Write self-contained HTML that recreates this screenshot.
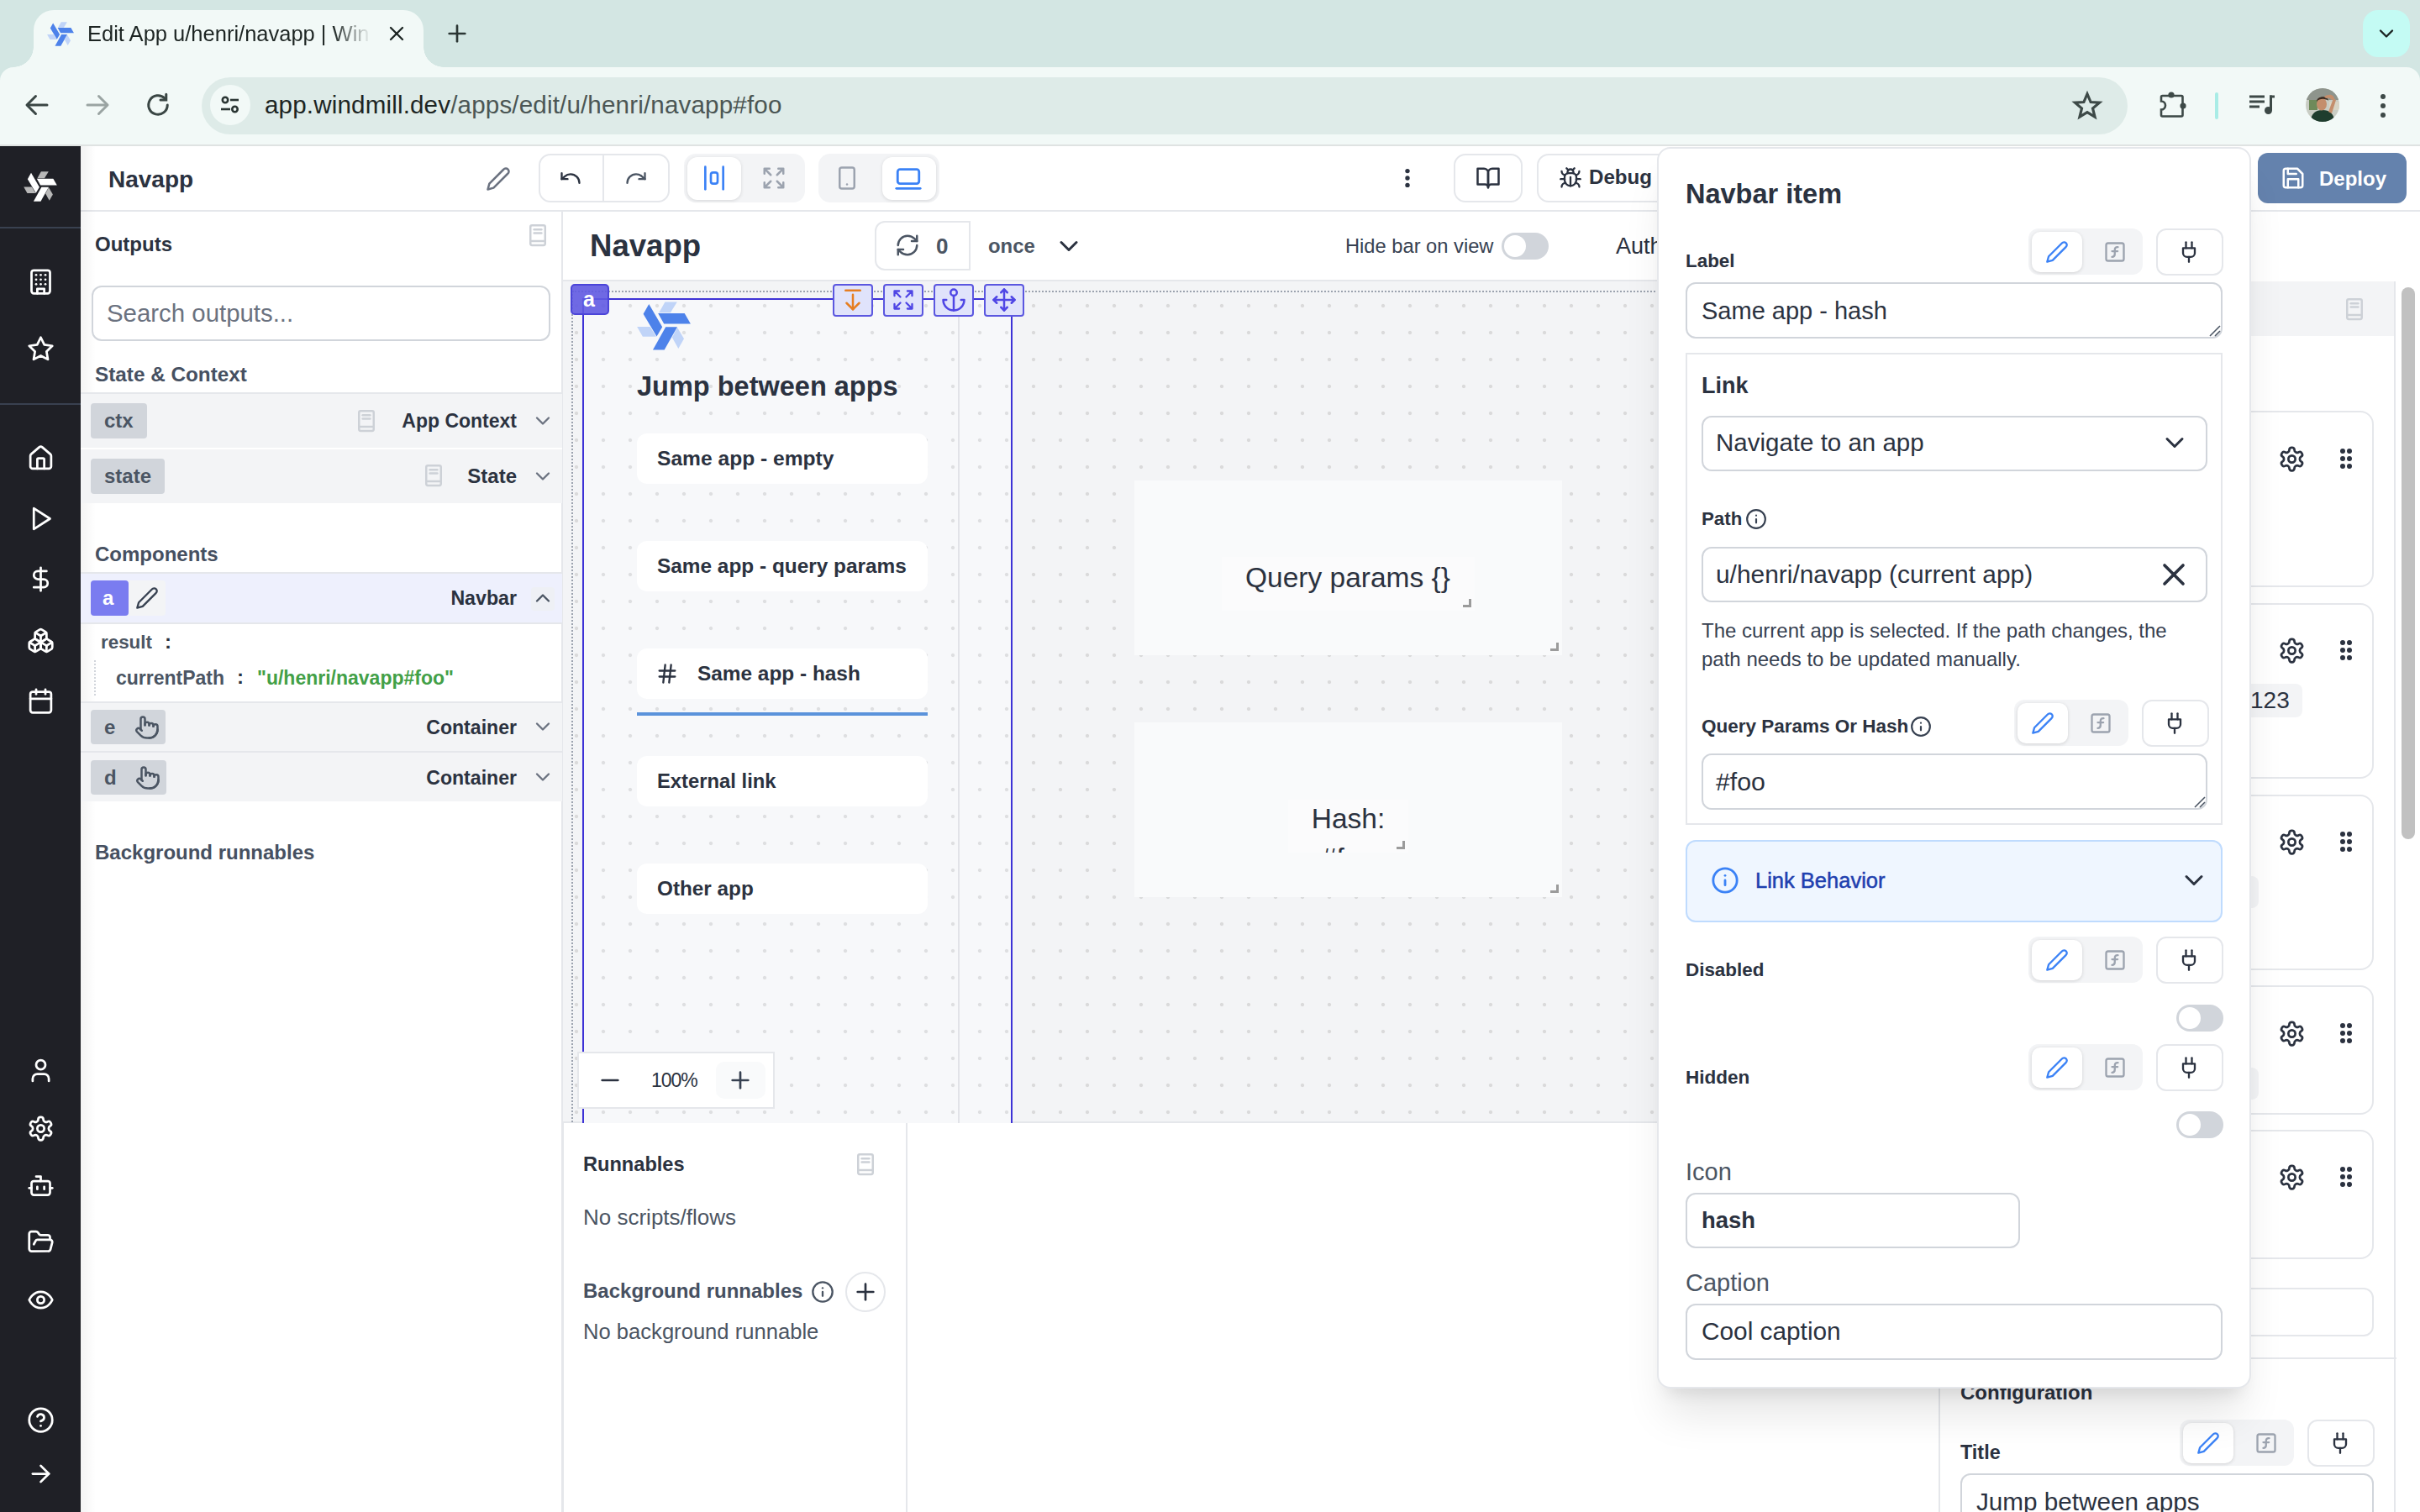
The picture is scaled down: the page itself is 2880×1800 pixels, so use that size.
<!DOCTYPE html>
<html><head><meta charset="utf-8">
<style>
*{box-sizing:border-box;margin:0;padding:0}
html,body{width:2880px;height:1800px;overflow:hidden;background:#fff;font-family:"Liberation Sans",sans-serif;color:#2b3240}
.a{position:absolute}
svg{display:block}
.ic{fill:none;stroke:currentColor;stroke-width:2;stroke-linecap:round;stroke-linejoin:round}
.t{position:absolute;white-space:nowrap}
.b{font-weight:bold}
@media (max-width:2000px){html{zoom:0.5}}
</style></head>
<body>
<svg width="0" height="0" style="position:absolute"><defs>
<symbol id="wmD" viewBox="8 9 64 58"><polygon points="22.3,11.9 38.2,39.2 31.5,50.6 15.6,23.8"/><polygon points="33.2,23.1 64.7,23.1 71.9,35.5 40.2,35.5"/><polygon points="42.2,39.2 56,39.2 40.7,66.5 27,66.5"/></symbol>
<symbol id="wmL" viewBox="8 9 64 58"><polygon points="41.4,9.4 55.8,9.4 47.9,22.3 34.2,22.3"/><polygon points="8.2,38.9 23.6,38.9 31,50.8 14.9,50.8"/><polygon points="56,39.7 64,53.3 57.3,65 49.9,51.8"/></symbol>
</defs></svg>
<!-- ============ BROWSER CHROME ============ -->
<div class="a" style="left:0;top:0;width:2880px;height:120px;background:#d3e6e3"></div>

<div class="a" style="left:0;top:80px;width:2880px;height:94px;background:#f2f9f7;border-bottom:2px solid #dfe3e2;border-radius:16px 16px 0 0"></div>
<!-- tab -->
<div class="a" style="left:40px;top:12px;width:464px;height:80px;background:#f2f9f7;border-radius:24px 24px 0 0"></div>
<div class="a" style="left:16px;top:56px;width:24px;height:24px;background:radial-gradient(circle at 0 0,transparent 23.5px,#f2f9f7 24px)"></div>
<div class="a" style="left:504px;top:56px;width:24px;height:24px;background:radial-gradient(circle at 100% 0,transparent 23.5px,#f2f9f7 24px)"></div>
<svg class="a" style="left:56px;top:26px" width="32" height="29"><use href="#wmL" fill="#c0d4f8"/><use href="#wmD" fill="#4d82ea"/></svg>
<div class="t" style="left:104px;top:22px;font-size:25.5px;line-height:36px;color:#1d2523;width:334px;overflow:hidden;-webkit-mask-image:linear-gradient(90deg,#000 292px,transparent 338px)">Edit App u/henri/navapp | Windmill</div>
<svg class="a ic" style="left:458px;top:26px;color:#1d2523" width="28" height="28" viewBox="0 0 24 24" stroke-width="2.8" stroke-linecap="butt"><path d="M18 6 6 18"/><path d="m6 6 12 12"/></svg>
<svg class="a ic" style="left:528px;top:24px;color:#2b3634" width="32" height="32" viewBox="0 0 24 24" stroke-width="2.5" stroke-linecap="butt"><path d="M5 12h14"/><path d="M12 5v14"/></svg>
<!-- tab dropdown -->
<div class="a" style="left:2812px;top:12px;width:56px;height:56px;background:#c4fbf4;border-radius:18px"></div>
<svg class="a ic" style="left:2826px;top:26px;color:#1b2321" width="28" height="28" viewBox="0 0 24 24" stroke-width="2.8" stroke-linecap="butt" stroke-linejoin="miter"><path d="m6 9 6 6 6-6"/></svg>
<!-- nav buttons -->
<svg class="a ic" style="left:26px;top:107px;color:#3a4644" width="36" height="36" viewBox="0 0 24 24" stroke-width="2.1" stroke-linecap="butt" stroke-linejoin="miter"><path d="M20 12H5"/><path d="m11 5-7 7 7 7"/></svg>
<svg class="a ic" style="left:98px;top:107px;color:#9aa4a2" width="36" height="36" viewBox="0 0 24 24" stroke-width="2.1" stroke-linecap="butt" stroke-linejoin="miter"><path d="M4 12h15"/><path d="m13 5 7 7-7 7"/></svg>
<svg class="a ic" style="left:170px;top:107px;color:#3a4644" width="36" height="36" viewBox="0 0 24 24" stroke-width="2.2" stroke-linecap="butt"><path d="M19.5 12a7.5 7.5 0 1 1-2.2-5.3"/><path d="M18.5 3.5v4.5H14" stroke-linejoin="miter"/></svg>
<!-- url bar -->
<div class="a" style="left:240px;top:92px;width:2292px;height:68px;background:#deebe8;border-radius:34px"></div>
<div class="a" style="left:250px;top:101px;width:48px;height:48px;background:#f2f9f7;border-radius:24px"></div>
<svg class="a" style="left:258px;top:109px" width="32" height="32" viewBox="0 0 32 32" fill="none" stroke="#2a3533" stroke-width="2.6">
 <circle cx="10" cy="10" r="3.2"/><path d="M16 10h10"/><circle cx="21.5" cy="21" r="3.2"/><path d="M5 21h11"/>
</svg>
<div class="t" style="left:315px;top:107px;font-size:29.6px;line-height:36px;color:#1d2523;letter-spacing:0.15px">app.windmill.dev<span style="color:#4b5654">/apps/edit/u/henri/navapp#foo</span></div>
<!-- right icons -->
<svg class="a" style="left:2465px;top:107px" width="38" height="38" viewBox="0 0 24 24" fill="none" stroke="#3d4947" stroke-width="2" stroke-linejoin="miter"><polygon points="12 3 14.6 9.2 21.2 9.6 16.1 13.9 17.7 20.3 12 16.8 6.3 20.3 7.9 13.9 2.8 9.6 9.4 9.2 12 3"/></svg>
<svg class="a" style="left:2560px;top:100px" width="48" height="48" viewBox="0 0 48 48"><path d="M13.5 14 H36 a1.5 1.5 0 0 1 1.5 1.5 V37 a1.5 1.5 0 0 1 -1.5 1.5 H13.5 a1.5 1.5 0 0 1 -1.5 -1.5 V30.5 A5 5 0 0 0 12 20.5 V15.5 a1.5 1.5 0 0 1 1.5 -1.5Z" fill="none" stroke="#3d4947" stroke-width="2.6"/><circle cx="24" cy="13" r="3.6" fill="#3d4947"/><circle cx="38" cy="26" r="3.6" fill="#3d4947"/></svg>
<div class="a" style="left:2636px;top:110px;width:4px;height:32px;background:#a9ece6;border-radius:2px"></div>
<svg class="a" style="left:2674px;top:106px" width="36" height="36" viewBox="0 0 24 24" fill="#3d4947"><rect x="2" y="5" width="12" height="2"/><rect x="2" y="9" width="12" height="2"/><rect x="2" y="13" width="8" height="2"/><rect x="18" y="5" width="4" height="2"/><rect x="18" y="5" width="2" height="12"/><circle cx="17" cy="17" r="3"/></svg>
<svg class="a" style="left:2744px;top:105px" width="40" height="40" viewBox="0 0 40 40"><defs><clipPath id="avc"><circle cx="20" cy="20" r="20"/></clipPath></defs><g clip-path="url(#avc)"><rect width="40" height="40" fill="#c9cdc4"/><rect x="0" y="0" width="40" height="14" fill="#8e948c"/><rect x="4" y="14" width="10" height="12" fill="#6f8a5a"/><rect x="28" y="16" width="12" height="10" fill="#d8d4c4"/><path d="M6 40 C6 30 12 26 20 26 C28 26 34 30 34 40Z" fill="#1f3d2e"/><path d="M27 28 L33 12 L36 14 L31 30Z" fill="#c48e6c"/><ellipse cx="19" cy="19" rx="6" ry="7.5" fill="#c48e6c"/><path d="M13 16 C13 9 26 8 27 15 C24 12 16 12 13 16Z" fill="#3b2a20"/><path d="M22 10 C28 6 34 8 34 13 L31 14 C29 11 26 11 24 12Z" fill="#c48e6c"/></g></svg>
<svg class="a" style="left:2824px;top:107px" width="24" height="38" viewBox="0 0 24 38" fill="#3d4947"><circle cx="12" cy="8" r="3"/><circle cx="12" cy="19" r="3"/><circle cx="12" cy="30" r="3"/></svg>


<!-- ============ SIDEBAR ============ -->
<div class="a" style="left:0;top:174px;width:96px;height:1626px;background:#1f2026"></div>
<svg class="a" style="left:28px;top:204px" width="40" height="36"><use href="#wmL" fill="#b8b8b8"/><use href="#wmD" fill="#fff"/></svg>
<div class="a" style="left:0;top:270px;width:96px;height:2px;background:#394150"></div>
<div class="a" style="left:0;top:480px;width:96px;height:2px;background:#394150"></div>
<div id="sideicons" style="color:#fff">
<svg class="a ic" style="left:32px;top:319px" width="33" height="33" viewBox="0 0 24 24"><rect width="16" height="20" x="4" y="2" rx="2" ry="2"/><path d="M9 22v-4h6v4"/><path d="M8 6h.01"/><path d="M16 6h.01"/><path d="M12 6h.01"/><path d="M12 10h.01"/><path d="M12 14h.01"/><path d="M16 10h.01"/><path d="M16 14h.01"/><path d="M8 10h.01"/><path d="M8 14h.01"/></svg>
<svg class="a ic" style="left:32px;top:399px" width="33" height="33" viewBox="0 0 24 24"><polygon points="12 2 15.09 8.26 22 9.27 17 14.14 18.18 21.02 12 17.77 5.82 21.02 7 14.14 2 9.27 8.91 8.26 12 2"/></svg>
<svg class="a ic" style="left:32px;top:529px" width="33" height="33" viewBox="0 0 24 24"><path d="M15 21v-8a1 1 0 0 0-1-1h-4a1 1 0 0 0-1 1v8"/><path d="M3 10a2 2 0 0 1 .709-1.528l7-5.999a2 2 0 0 1 2.582 0l7 5.999A2 2 0 0 1 21 10v9a2 2 0 0 1-2 2H5a2 2 0 0 1-2-2z"/></svg>
<svg class="a ic" style="left:32px;top:601px" width="33" height="33" viewBox="0 0 24 24"><polygon points="6 3 20 12 6 21 6 3"/></svg>
<svg class="a ic" style="left:32px;top:673px" width="33" height="33" viewBox="0 0 24 24"><line x1="12" x2="12" y1="2" y2="22"/><path d="M17 5H9.5a3.5 3.5 0 0 0 0 7h5a3.5 3.5 0 0 1 0 7H6"/></svg>
<svg class="a ic" style="left:32px;top:746px" width="33" height="33" viewBox="0 0 24 24"><path d="M2.97 12.92A2 2 0 0 0 2 14.63v3.24a2 2 0 0 0 .97 1.71l3 1.8a2 2 0 0 0 2.06 0L12 19v-5.5l-5-3-4.03 2.42Z"/><path d="m7 16.5-4.74-2.85"/><path d="m7 16.5 5-3"/><path d="M7 16.5v5.17"/><path d="M12 13.5V19l3.97 2.38a2 2 0 0 0 2.06 0l3-1.8a2 2 0 0 0 .97-1.71v-3.24a2 2 0 0 0-.97-1.71L17 10.5l-5 3Z"/><path d="m17 16.5-5-3"/><path d="m17 16.5 4.74-2.85"/><path d="M17 16.5v5.17"/><path d="M7.97 4.42A2 2 0 0 0 7 6.13v4.37l5 3 5-3V6.13a2 2 0 0 0-.97-1.71l-3-1.8a2 2 0 0 0-2.06 0l-3 1.8Z"/><path d="M12 8 7.26 5.15"/><path d="m12 8 4.74-2.85"/><path d="M12 13.5V8"/></svg>
<svg class="a ic" style="left:32px;top:818px" width="33" height="33" viewBox="0 0 24 24"><rect width="18" height="18" x="3" y="4" rx="2" ry="2"/><line x1="16" x2="16" y1="2" y2="6"/><line x1="8" x2="8" y1="2" y2="6"/><line x1="3" x2="21" y1="10" y2="10"/></svg>
<svg class="a ic" style="left:32px;top:1258px" width="33" height="33" viewBox="0 0 24 24"><path d="M19 21v-2a4 4 0 0 0-4-4H9a4 4 0 0 0-4 4v2"/><circle cx="12" cy="7" r="4"/></svg>
<svg class="a ic" style="left:32px;top:1327px" width="33" height="33" viewBox="0 0 24 24"><path d="M12.22 2h-.44a2 2 0 0 0-2 2v.18a2 2 0 0 1-1 1.73l-.43.25a2 2 0 0 1-2 0l-.15-.08a2 2 0 0 0-2.73.73l-.22.38a2 2 0 0 0 .73 2.73l.15.1a2 2 0 0 1 1 1.72v.51a2 2 0 0 1-1 1.74l-.15.09a2 2 0 0 0-.73 2.73l.22.38a2 2 0 0 0 2.73.73l.15-.08a2 2 0 0 1 2 0l.43.25a2 2 0 0 1 1 1.73V20a2 2 0 0 0 2 2h.44a2 2 0 0 0 2-2v-.18a2 2 0 0 1 1-1.73l.43-.25a2 2 0 0 1 2 0l.15.08a2 2 0 0 0 2.73-.73l.22-.39a2 2 0 0 0-.73-2.73l-.15-.08a2 2 0 0 1-1-1.74v-.5a2 2 0 0 1 1-1.74l.15-.09a2 2 0 0 0 .73-2.73l-.22-.38a2 2 0 0 0-2.73-.73l-.15.08a2 2 0 0 1-2 0l-.43-.25a2 2 0 0 1-1-1.73V4a2 2 0 0 0-2-2z"/><circle cx="12" cy="12" r="3"/></svg>
<svg class="a ic" style="left:32px;top:1395px" width="33" height="33" viewBox="0 0 24 24"><path d="M12 8V4H8"/><rect width="16" height="12" x="4" y="8" rx="2"/><path d="M2 14h2"/><path d="M20 14h2"/><path d="M15 13v2"/><path d="M9 13v2"/></svg>
<svg class="a ic" style="left:32px;top:1462px" width="33" height="33" viewBox="0 0 24 24"><path d="m6 14 1.5-2.9A2 2 0 0 1 9.24 10H20a2 2 0 0 1 1.94 2.5l-1.54 6a2 2 0 0 1-1.95 1.5H4a2 2 0 0 1-2-2V5a2 2 0 0 1 2-2h3.9a2 2 0 0 1 1.69.9l.81 1.2a2 2 0 0 0 1.67.9H18a2 2 0 0 1 2 2v2"/></svg>
<svg class="a ic" style="left:32px;top:1531px" width="33" height="33" viewBox="0 0 24 24"><path d="M2 12s3-7 10-7 10 7 10 7-3 7-10 7-10-7-10-7Z"/><circle cx="12" cy="12" r="3"/></svg>
<svg class="a ic" style="left:32px;top:1674px" width="33" height="33" viewBox="0 0 24 24"><circle cx="12" cy="12" r="10"/><path d="M9.09 9a3 3 0 0 1 5.83 1c0 2-3 3-3 3"/><path d="M12 17h.01"/></svg>
<svg class="a ic" style="left:32px;top:1738px" width="33" height="33" viewBox="0 0 24 24"><path d="M5 12h14"/><path d="m12 5 7 7-7 7"/></svg>
</div>

<!-- ============ APP HEADER ============ -->
<div class="a" style="left:96px;top:174px;width:2784px;height:78px;background:#fff;border-bottom:2px solid #e5e7eb"></div>
<div class="a" style="left:96px;top:174px;width:18px;height:1626px;background:linear-gradient(90deg,rgba(0,0,0,.05),rgba(0,0,0,0))"></div>
<div class="t b" style="left:129px;top:196px;font-size:28px;line-height:36px;color:#2b3240">Navapp</div>
<svg class="a ic" style="left:578px;top:198px;color:#6b7280" width="30" height="30" viewBox="0 0 24 24" stroke-width="1.7"><path d="M17 3a2.85 2.83 0 1 1 4 4L7.5 20.5 2 22l1.5-5.5Z"/></svg>
<!-- undo/redo -->
<div class="a" style="left:641px;top:183px;width:156px;height:58px;border:2px solid #e5e7eb;border-radius:14px;background:#fff"></div>
<div class="a" style="left:717px;top:185px;width:2px;height:54px;background:#e5e7eb"></div>
<svg class="a ic" style="left:665px;top:198px;color:#2b3240" width="28" height="28" viewBox="0 0 24 24" stroke-width="2.2"><path d="M3 7v6h6"/><path d="M21 17a9 9 0 0 0-9-9 9 9 0 0 0-6 2.3L3 13"/></svg>
<svg class="a ic" style="left:743px;top:198px;color:#4b5563" width="28" height="28" viewBox="0 0 24 24" stroke-width="2.2"><path d="M21 7v6h-6"/><path d="M3 17a9 9 0 0 1 9-9 9 9 0 0 1 6 2.3l3 2.7"/></svg>
<!-- layout group -->
<div class="a" style="left:814px;top:183px;width:144px;height:58px;border-radius:14px;background:#f3f4f6"></div>
<div class="a" style="left:818px;top:187px;width:64px;height:51px;border-radius:12px;background:#fff;box-shadow:0 1px 4px rgba(0,0,0,.12)"></div>
<svg class="a ic" style="left:834px;top:196px;color:#3b82f6" width="32" height="32" viewBox="0 0 24 24" stroke-width="2"><rect width="6" height="10" x="9" y="7" rx="2"/><path d="M4 22V2"/><path d="M20 22V2"/></svg>
<svg class="a ic" style="left:906px;top:197px;color:#9ca3af" width="30" height="30" viewBox="0 0 24 24" stroke-width="2"><path d="m21 21-6-6m6 6v-4.8m0 4.8h-4.8"/><path d="M3 16.2V21m0 0h4.8M3 21l6-6"/><path d="M21 7.8V3m0 0h-4.8M21 3l-6 6"/><path d="M3 7.8V3m0 0h4.8M3 3l6 6"/></svg>
<!-- device group -->
<div class="a" style="left:974px;top:183px;width:144px;height:58px;border-radius:14px;background:#f3f4f6"></div>
<div class="a" style="left:1050px;top:187px;width:64px;height:51px;border-radius:12px;background:#fff;box-shadow:0 1px 4px rgba(0,0,0,.12)"></div>
<svg class="a ic" style="left:993px;top:197px;color:#9ca3af" width="30" height="30" viewBox="0 0 24 24" stroke-width="2"><rect width="14" height="20" x="5" y="2" rx="2" ry="2"/><path d="M12 18h.01"/></svg>
<svg class="a ic" style="left:1064px;top:196px;color:#3b82f6" width="34" height="34" viewBox="0 0 24 24" stroke-width="2"><rect width="18" height="12" x="3" y="4" rx="2" ry="2"/><line x1="2" x2="22" y1="20" y2="20"/></svg>
<!-- right side -->
<svg class="a" style="left:1662px;top:194px" width="26" height="36" viewBox="0 0 26 36" fill="#2b3240"><circle cx="13" cy="9.6" r="2.7"/><circle cx="13" cy="18" r="2.7"/><circle cx="13" cy="26.4" r="2.7"/></svg>
<div class="a" style="left:1730px;top:183px;width:82px;height:58px;border:2px solid #e5e7eb;border-radius:14px;background:#fff"></div>
<svg class="a ic" style="left:1756px;top:197px;color:#2b3240" width="30" height="30" viewBox="0 0 24 24" stroke-width="2.2"><path d="M2 3h6a4 4 0 0 1 4 4v14a3 3 0 0 0-3-3H2z"/><path d="M22 3h-6a4 4 0 0 0-4 4v14a3 3 0 0 1 3-3h7z"/></svg>
<div class="a" style="left:1829px;top:183px;width:200px;height:58px;border:2px solid #e5e7eb;border-radius:14px;background:#fff"></div>
<svg class="a ic" style="left:1855px;top:198px;color:#2b3240" width="28" height="28" viewBox="0 0 24 24" stroke-width="2"><path d="m8 2 1.88 1.88"/><path d="M14.12 3.88 16 2"/><path d="M9 7.13v-1a3.003 3.003 0 1 1 6 0v1"/><path d="M12 20c-3.3 0-6-2.7-6-6v-3a4 4 0 0 1 4-4h4a4 4 0 0 1 4 4v3c0 3.3-2.7 6-6 6"/><path d="M12 20v-9"/><path d="M6.53 9C4.6 8.8 3 7.1 3 5"/><path d="M6 13H2"/><path d="M3 21c0-2.1 1.7-3.9 3.8-4"/><path d="M20.97 5c0 2.1-1.6 3.8-3.5 4"/><path d="M22 13h-4"/><path d="M17.2 17c2.1.1 3.8 1.9 3.8 4"/></svg>
<div class="t b" style="left:1891px;top:193px;font-size:24.1px;line-height:36px;color:#2b3240">Debug</div>
<!-- deploy -->
<div class="a" style="left:2687px;top:182px;width:177px;height:60px;border-radius:12px;background:#6482ad"></div>
<svg class="a ic" style="left:2714px;top:197px;color:#fff" width="30" height="30" viewBox="0 0 24 24" stroke-width="2"><path d="M19 21H5a2 2 0 0 1-2-2V5a2 2 0 0 1 2-2h11l5 5v11a2 2 0 0 1-2 2z"/><polyline points="17 21 17 13 7 13 7 21"/><polyline points="7 3 7 8 15 8"/></svg>
<div class="t b" style="left:2760px;top:195px;font-size:24.0px;line-height:36px;color:#fff">Deploy</div>

<!-- ============ LEFT PANEL ============ -->
<div class="a" style="left:96px;top:252px;width:574px;height:1548px;background:#fff;border-right:2px solid #e5e7eb"></div>
<div class="a" style="left:96px;top:252px;width:18px;height:1548px;background:linear-gradient(90deg,rgba(0,0,0,.045),rgba(0,0,0,0))"></div>
<div class="t b" style="left:113px;top:276px;font-size:24px;line-height:30px;color:#2b3240">Outputs</div>
<svg class="a ic" style="left:625px;top:265px;color:#cdd1d7" width="30" height="30" viewBox="0 0 24 24" stroke-width="1.6"><rect x="5" y="2.5" width="14" height="19" rx="1.5"/><path d="M5 17.5h14"/><path d="M8.5 6.5h7"/><path d="M8.5 10h7"/></svg>
<div class="a" style="left:109px;top:340px;width:546px;height:66px;border:2px solid #d1d5db;border-radius:12px;background:#fff"></div>
<div class="t" style="left:127px;top:355px;font-size:29.4px;line-height:36px;color:#6b7280">Search outputs...</div>
<div class="t b" style="left:113px;top:431px;font-size:24.3px;line-height:30px;color:#465061">State &amp; Context</div>
<!-- ctx row -->
<div class="a" style="left:96px;top:467px;width:573px;height:66px;background:#f3f4f6;border-top:2px solid #e5e7eb"></div>
<div class="a" style="left:108px;top:480px;width:67px;height:42px;background:#d1d5db;border-radius:4px"></div>
<div class="t b" style="left:124px;top:486px;font-size:24px;line-height:30px;color:#4b5563">ctx</div>
<svg class="a ic" style="left:421px;top:486px;color:#cdd1d7" width="30" height="30" viewBox="0 0 24 24" stroke-width="1.6"><rect x="5" y="2.5" width="14" height="19" rx="1.5"/><path d="M5 17.5h14"/><path d="M8.5 6.5h7"/><path d="M8.5 10h7"/></svg>
<div class="t b" style="right:2265px;top:486px;font-size:23.0px;line-height:30px;color:#2b3240">App Context</div>
<svg class="a ic" style="left:632px;top:487px;color:#6b7280" width="28" height="28" viewBox="0 0 24 24" stroke-width="1.8"><path d="m6 9 6 6 6-6"/></svg>
<div class="a" style="left:96px;top:533px;width:573px;height:2px;background:#fff"></div>
<!-- state row -->
<div class="a" style="left:96px;top:535px;width:573px;height:64px;background:#f3f4f6"></div>
<div class="a" style="left:108px;top:546px;width:88px;height:42px;background:#d1d5db;border-radius:4px"></div>
<div class="t b" style="left:124px;top:552px;font-size:24px;line-height:30px;color:#4b5563">state</div>
<svg class="a ic" style="left:501px;top:551px;color:#cdd1d7" width="30" height="30" viewBox="0 0 24 24" stroke-width="1.6"><rect x="5" y="2.5" width="14" height="19" rx="1.5"/><path d="M5 17.5h14"/><path d="M8.5 6.5h7"/><path d="M8.5 10h7"/></svg>
<div class="t b" style="right:2265px;top:552px;font-size:24px;line-height:30px;color:#2b3240">State</div>
<svg class="a ic" style="left:632px;top:553px;color:#6b7280" width="28" height="28" viewBox="0 0 24 24" stroke-width="1.8"><path d="m6 9 6 6 6-6"/></svg>
<div class="t b" style="left:113px;top:645px;font-size:24px;line-height:30px;color:#465061">Components</div>
<!-- navbar row -->
<div class="a" style="left:96px;top:681px;width:573px;height:62px;background:#eef0fd;border-top:2px solid #e5e7eb;border-bottom:2px solid #e5e7eb"></div>
<div class="a" style="left:108px;top:691px;width:45px;height:42px;background:#7a7cf0;border-radius:4px"></div>
<div class="t b" style="left:122px;top:697px;font-size:24px;line-height:30px;color:#fff">a</div>
<div class="a" style="left:153px;top:691px;width:44px;height:42px;background:#f3f4f6;border-radius:0 4px 4px 0"></div>
<svg class="a ic" style="left:161px;top:698px;color:#374151" width="28" height="28" viewBox="0 0 24 24" stroke-width="1.8"><path d="M17 3a2.85 2.83 0 1 1 4 4L7.5 20.5 2 22l1.5-5.5Z"/></svg>
<div class="t b" style="right:2265px;top:697px;font-size:23.2px;line-height:30px;color:#2b3240">Navbar</div>
<div class="a" style="left:632px;top:699px;width:28px;height:28px;background:#eef0f5;border-radius:4px"></div>
<svg class="a ic" style="left:632px;top:698px;color:#4b5563" width="28" height="28" viewBox="0 0 24 24" stroke-width="1.8"><path d="m18 15-6-6-6 6"/></svg>
<div class="t b" style="left:120px;top:750px;font-size:22.4px;line-height:30px;color:#4b5563">result</div>
<div class="t b" style="left:196px;top:749px;font-size:24px;line-height:30px;color:#2b3240">:</div>
<div class="a" style="left:112px;top:786px;width:0;height:42px;border-left:2px dotted #d1d5db"></div>
<div class="t" style="left:138px;top:792px;font-size:23px;line-height:30px;color:#4b5563;font-weight:bold">currentPath</div>
<div class="t b" style="left:282px;top:791px;font-size:24px;line-height:30px;color:#2b3240">:</div>
<div class="t" style="left:306px;top:792px;font-size:23px;line-height:30px;color:#43a047;font-weight:bold">"u/henri/navapp#foo"</div>
<!-- e row -->
<div class="a" style="left:96px;top:835px;width:573px;height:59px;background:#f3f4f6;border-top:2px solid #e5e7eb"></div>
<div class="a" style="left:108px;top:845px;width:89px;height:41px;background:#d1d5db;border-radius:4px"></div>
<div class="t b" style="left:124px;top:851px;font-size:24px;line-height:30px;color:#4b5563">e</div>
<svg class="a ic" style="left:160px;top:851px;color:#4b5563" width="30" height="30" viewBox="0 0 24 24" stroke-width="1.7"><path d="M22 14a8 8 0 0 1-8 8"/><path d="M18 11v-1a2 2 0 0 0-2-2a2 2 0 0 0-2 2"/><path d="M14 10V9a2 2 0 0 0-2-2a2 2 0 0 0-2 2v1"/><path d="M10 9.5V4a2 2 0 0 0-2-2a2 2 0 0 0-2 2v10"/><path d="M18 11a2 2 0 1 1 4 0v3a8 8 0 0 1-8 8h-2c-2.8 0-4.5-.86-5.99-2.34l-3.6-3.6a2 2 0 0 1 2.83-2.82L7 15"/></svg>
<div class="t b" style="right:2265px;top:851px;font-size:23.1px;line-height:30px;color:#2b3240">Container</div>
<svg class="a ic" style="left:632px;top:851px;color:#6b7280" width="28" height="28" viewBox="0 0 24 24" stroke-width="1.8"><path d="m6 9 6 6 6-6"/></svg>
<!-- d row -->
<div class="a" style="left:96px;top:894px;width:573px;height:60px;background:#f3f4f6;border-top:2px solid #e5e7eb"></div>
<div class="a" style="left:108px;top:905px;width:90px;height:41px;background:#d1d5db;border-radius:4px"></div>
<div class="t b" style="left:124px;top:911px;font-size:24px;line-height:30px;color:#4b5563">d</div>
<svg class="a ic" style="left:161px;top:911px;color:#4b5563" width="30" height="30" viewBox="0 0 24 24" stroke-width="1.7"><path d="M22 14a8 8 0 0 1-8 8"/><path d="M18 11v-1a2 2 0 0 0-2-2a2 2 0 0 0-2 2"/><path d="M14 10V9a2 2 0 0 0-2-2a2 2 0 0 0-2 2v1"/><path d="M10 9.5V4a2 2 0 0 0-2-2a2 2 0 0 0-2 2v10"/><path d="M18 11a2 2 0 1 1 4 0v3a8 8 0 0 1-8 8h-2c-2.8 0-4.5-.86-5.99-2.34l-3.6-3.6a2 2 0 0 1 2.83-2.82L7 15"/></svg>
<div class="t b" style="right:2265px;top:911px;font-size:23.1px;line-height:30px;color:#2b3240">Container</div>
<svg class="a ic" style="left:632px;top:911px;color:#6b7280" width="28" height="28" viewBox="0 0 24 24" stroke-width="1.8"><path d="m6 9 6 6 6-6"/></svg>
<div class="t b" style="left:113px;top:1000px;font-size:24px;line-height:30px;color:#465061">Background runnables</div>

<!-- ============ CANVAS ============ -->
<div class="a" style="left:670px;top:252px;width:1637px;height:83px;background:#fff;border-bottom:2px solid #e5e7eb"></div>
<div class="t b" style="left:702px;top:272px;font-size:36.6px;line-height:42px;color:#2b3240">Navapp</div>
<div class="a" style="left:1041px;top:263px;width:114px;height:59px;border:2px solid #e5e7eb;border-radius:12px 0 0 12px;background:#fff"></div>
<svg class="a ic" style="left:1065px;top:277px;color:#4b5563" width="30" height="30" viewBox="0 0 24 24" stroke-width="2"><path d="M3 12a9 9 0 0 1 9-9 9.75 9.75 0 0 1 6.74 2.74L21 8"/><path d="M21 3v5h-5"/><path d="M21 12a9 9 0 0 1-9 9 9.75 9.75 0 0 1-6.74-2.74L3 16"/><path d="M8 16H3v5"/></svg>
<div class="t b" style="left:1114px;top:278px;font-size:26px;line-height:30px;color:#4b5563">0</div>
<div class="t b" style="left:1176px;top:277px;font-size:23.9px;line-height:32px;color:#4b5563">once</div>
<svg class="a ic" style="left:1254px;top:275px;color:#2b3240" width="36" height="36" viewBox="0 0 24 24" stroke-width="2"><path d="m6 9 6 6 6-6"/></svg>
<div class="t" style="left:1601px;top:277px;font-size:23.7px;line-height:32px;color:#374151">Hide bar on view</div>
<div class="a" style="left:1787px;top:277px;width:56px;height:32px;border-radius:16px;background:#d1d5db"></div>
<div class="a" style="left:1790px;top:280px;width:26px;height:26px;border-radius:13px;background:#fff"></div>
<div class="t" style="left:1923px;top:277px;font-size:27px;line-height:32px;color:#2b3240">Authenticated</div>
<div class="a" style="left:670px;top:335px;width:1637px;height:1002px;background-color:#f3f4f6;background-image:radial-gradient(circle,#dadadb 1.6px,rgba(218,218,219,0) 2.6px);background-size:32px 32px;background-position:0px 13px;border-bottom:2px solid #e5e7eb"></div>
<div class="a" style="left:681px;top:346px;width:1300px;height:0;border-top:2px dotted #9ca3af"></div>
<div class="a" style="left:680px;top:346px;width:0;height:990px;border-left:2px dotted #9ca3af"></div>
<div class="a" style="left:693px;top:355px;width:512px;height:982px;background-color:#f7f8fa;background-image:radial-gradient(circle,#dedfe1 1.6px,rgba(222,223,225,0) 2.6px);background-size:32px 32px;background-position:-25px -9px;border:2px solid #3d32d6;border-bottom:none"></div>
<div class="a" style="left:1140px;top:357px;width:2px;height:980px;background:#e2e3e8"></div>
<div class="a" style="left:679px;top:338px;width:46px;height:37px;background:rgba(96,90,226,.9);border:2px solid #4b45d8;border-radius:5px"></div>
<div class="t b" style="left:694px;top:340px;font-size:25px;line-height:32px;color:#fff">a</div>
<div class="a" style="left:991px;top:338px;width:48px;height:39px;background:#e0e3fb;border:2px solid #5b57e0;border-radius:4px"></div>
<div class="a" style="left:1051px;top:338px;width:48px;height:39px;background:#e0e3fb;border:2px solid #5b57e0;border-radius:4px"></div>
<div class="a" style="left:1111px;top:338px;width:48px;height:39px;background:#e0e3fb;border:2px solid #5b57e0;border-radius:4px"></div>
<div class="a" style="left:1171px;top:338px;width:48px;height:39px;background:#e0e3fb;border:2px solid #5b57e0;border-radius:4px"></div>

<svg class="a ic" style="left:1000px;top:342px;color:#e67e22" width="30" height="30" viewBox="0 0 24 24" stroke-width="2"><path d="M19 3H5"/><path d="M12 21V7"/><path d="m6 15 6 6 6-6"/></svg>
<svg class="a ic" style="left:1061px;top:343px;color:#4f46e5" width="28" height="28" viewBox="0 0 24 24" stroke-width="2.2"><path d="m21 21-6-6m6 6v-4.8m0 4.8h-4.8"/><path d="M3 16.2V21m0 0h4.8M3 21l6-6"/><path d="M21 7.8V3m0 0h-4.8M21 3l-6 6"/><path d="M3 7.8V3m0 0h4.8M3 3l6 6"/></svg>
<svg class="a ic" style="left:1120px;top:342px;color:#4f46e5" width="30" height="30" viewBox="0 0 24 24" stroke-width="2.2"><path d="M12 22V8"/><path d="M5 12H2a10 10 0 0 0 20 0h-3"/><circle cx="12" cy="5" r="3"/></svg>
<svg class="a ic" style="left:1180px;top:342px;color:#4f46e5" width="30" height="30" viewBox="0 0 24 24" stroke-width="2.2"><path d="M12 2v20"/><path d="m15 19-3 3-3-3"/><path d="m19 9 3 3-3 3"/><path d="M2 12h20"/><path d="m5 9-3 3 3 3"/><path d="m9 5 3-3 3 3"/></svg>
<svg class="a" style="left:758px;top:359px" width="64" height="58"><use href="#wmL" fill="#c0d4f8"/><use href="#wmD" fill="#4d82ea"/></svg>
<div class="t b" style="left:758px;top:440px;font-size:32.5px;line-height:40px;color:#2b3240">Jump between apps</div>
<div class="a" style="left:758px;top:516px;width:346px;height:60px;background:#fff;border-radius:12px"></div>
<div class="t b" style="left:782px;top:531px;font-size:24.6px;line-height:30px;color:#2b3240">Same app - empty</div>
<div class="a" style="left:758px;top:644px;width:346px;height:60px;background:#fff;border-radius:12px"></div>
<div class="t b" style="left:782px;top:659px;font-size:24.4px;line-height:30px;color:#2b3240">Same app - query params</div>
<div class="a" style="left:758px;top:772px;width:346px;height:60px;background:#fff;border-radius:12px"></div>
<svg class="a ic" style="left:780px;top:788px;color:#2b3240" width="28" height="28" viewBox="0 0 24 24" stroke-width="2.2"><line x1="4" x2="20" y1="9" y2="9"/><line x1="4" x2="20" y1="15" y2="15"/><line x1="10" x2="8" y1="3" y2="21"/><line x1="16" x2="14" y1="3" y2="21"/></svg>
<div class="t b" style="left:830px;top:787px;font-size:24.4px;line-height:30px;color:#2b3240">Same app - hash</div>
<div class="a" style="left:758px;top:900px;width:346px;height:60px;background:#fff;border-radius:12px"></div>
<div class="t b" style="left:782px;top:915px;font-size:23.8px;line-height:30px;color:#2b3240">External link</div>
<div class="a" style="left:758px;top:1028px;width:346px;height:60px;background:#fff;border-radius:12px"></div>
<div class="t b" style="left:782px;top:1043px;font-size:24.3px;line-height:30px;color:#2b3240">Other app</div>

<div class="a" style="left:758px;top:848px;width:346px;height:4px;background:#5b93db"></div>
<!-- containers -->
<div class="a" style="left:1350px;top:572px;width:509px;height:208px;background:#f9fafb"></div>
<div class="a" style="left:1454px;top:663px;width:301px;height:64px;background:#fbfbfc"></div>
<div class="t" style="left:1482px;top:669px;font-size:33.5px;line-height:38px;color:#2b3240">Query params {}</div>
<div class="a" style="left:1741px;top:713px;width:10px;height:10px;border-right:3px solid #9b9b9b;border-bottom:3px solid #9b9b9b"></div>
<div class="a" style="left:1845px;top:765px;width:10px;height:10px;border-right:3px solid #9b9b9b;border-bottom:3px solid #9b9b9b"></div>
<div class="a" style="left:1350px;top:860px;width:509px;height:208px;background:#f9fafb"></div>
<div class="a" style="left:1533px;top:952px;width:143px;height:63px;background:#fbfbfc;overflow:hidden"><div class="t" style="left:0;width:143px;text-align:center;top:-1px;font-size:33.5px;line-height:47px;color:#2b3240">Hash:<br>#foo</div></div>
<div class="a" style="left:1662px;top:1001px;width:10px;height:10px;border-right:3px solid #9b9b9b;border-bottom:3px solid #9b9b9b"></div>
<div class="a" style="left:1845px;top:1053px;width:10px;height:10px;border-right:3px solid #9b9b9b;border-bottom:3px solid #9b9b9b"></div>
<!-- zoom control -->
<div class="a" style="left:687px;top:1252px;width:235px;height:68px;background:#fff;border:2px solid #e5e7eb"></div>
<svg class="a ic" style="left:710px;top:1270px;color:#2b3240" width="32" height="32" viewBox="0 0 24 24" stroke-width="2"><path d="M5 12h14"/></svg>
<div class="t" style="left:775px;top:1270px;font-size:23px;letter-spacing:-1px;line-height:32px;color:#2b3240">100%</div>
<div class="a" style="left:852px;top:1264px;width:59px;height:44px;background:#f9fafb;border-radius:10px"></div>
<svg class="a ic" style="left:865px;top:1270px;color:#374151" width="32" height="32" viewBox="0 0 24 24" stroke-width="1.7"><path d="M5 12h14"/><path d="M12 5v14"/></svg>
<!-- runnables -->
<div class="a" style="left:669px;top:1337px;width:411px;height:463px;background:#fff;border-left:2px solid #e5e7eb;border-right:2px solid #e5e7eb"></div>
<div class="t b" style="left:694px;top:1371px;font-size:23.6px;line-height:30px;color:#2b3240">Runnables</div>
<svg class="a ic" style="left:1015px;top:1371px;color:#cdd1d7" width="30" height="30" viewBox="0 0 24 24" stroke-width="1.6"><rect x="5" y="2.5" width="14" height="19" rx="1.5"/><path d="M5 17.5h14"/><path d="M8.5 6.5h7"/><path d="M8.5 10h7"/></svg>
<div class="t" style="left:694px;top:1434px;font-size:26px;line-height:30px;color:#4b5563">No scripts/flows</div>
<div class="t b" style="left:694px;top:1522px;font-size:24px;line-height:30px;color:#465061">Background runnables</div>
<svg class="a ic" style="left:965px;top:1524px;color:#4b5563" width="28" height="28" viewBox="0 0 24 24" stroke-width="1.8"><circle cx="12" cy="12" r="10"/><path d="M12 16v-4"/><path d="M12 8h.01"/></svg>
<div class="a" style="left:1006px;top:1514px;width:48px;height:48px;border:2px solid #e5e7eb;border-radius:24px;background:#fff"></div>
<svg class="a ic" style="left:1014px;top:1522px;color:#2b3240" width="32" height="32" viewBox="0 0 24 24" stroke-width="2"><path d="M5 12h14"/><path d="M12 5v14"/></svg>
<div class="t" style="left:694px;top:1570px;font-size:25.6px;line-height:30px;color:#4b5563">No background runnable</div>

<!-- ============ RIGHT PANEL ============ -->
<div class="a" style="left:2307px;top:252px;width:573px;height:1548px;background:#fff;border-left:2px solid #e5e7eb"></div>
<div class="a" style="left:2309px;top:335px;width:541px;height:65px;background:#f3f4f6"></div>
<svg class="a ic" style="left:2787px;top:353px;color:#cdd1d7" width="30" height="30" viewBox="0 0 24 24" stroke-width="1.6"><rect x="5" y="2.5" width="14" height="19" rx="1.5"/><path d="M5 17.5h14"/><path d="M8.5 6.5h7"/><path d="M8.5 10h7"/></svg>
<div class="a" style="left:2849px;top:335px;width:2px;height:1465px;background:#e5e7eb"></div>
<div class="a" style="left:2858px;top:342px;width:16px;height:657px;border-radius:8px;background:#c1c1c1"></div>
<div class="a" style="left:2333px;top:489px;width:492px;height:210px;border:2px solid #e5e7eb;border-radius:16px;background:#fff"></div>
<div class="a" style="left:2333px;top:718px;width:492px;height:209px;border:2px solid #e5e7eb;border-radius:16px;background:#fff"></div>
<div class="a" style="left:2333px;top:946px;width:492px;height:209px;border:2px solid #e5e7eb;border-radius:16px;background:#fff"></div>
<div class="a" style="left:2333px;top:1173px;width:492px;height:154px;border:2px solid #e5e7eb;border-radius:16px;background:#fff"></div>
<div class="a" style="left:2333px;top:1345px;width:492px;height:154px;border:2px solid #e5e7eb;border-radius:16px;background:#fff"></div>
<div class="a" style="left:2333px;top:1533px;width:492px;height:58px;border:2px solid #e5e7eb;border-radius:12px;background:#fff"></div>
<svg class="a ic" style="left:2711px;top:530px;color:#2b3240" width="33" height="33" viewBox="0 0 24 24" stroke-width="1.9"><path d="M12.22 2h-.44a2 2 0 0 0-2 2v.18a2 2 0 0 1-1 1.730l-.43.25a2 2 0 0 1-2 0l-.15-.08a2 2 0 0 0-2.73.73l-.22.38a2 2 0 0 0 .73 2.73l.15.1a2 2 0 0 1 1 1.72v.51a2 2 0 0 1-1 1.74l-.15.09a2 2 0 0 0-.73 2.73l.22.38a2 2 0 0 0 2.73.73l.15-.08a2 2 0 0 1 2 0l.43.25a2 2 0 0 1 1 1.73V20a2 2 0 0 0 2 2h.44a2 2 0 0 0 2-2v-.18a2 2 0 0 1 1-1.73l.43-.25a2 2 0 0 1 2 0l.15.08a2 2 0 0 0 2.73-.73l.22-.39a2 2 0 0 0-.73-2.730l-.15-.08a2 2 0 0 1-1-1.74v-.5a2 2 0 0 1 1-1.74l.15-.09a2 2 0 0 0 .73-2.73l-.22-.38a2 2 0 0 0-2.73-.73l-.15.08a2 2 0 0 1-2 0l-.43-.25a2 2 0 0 1-1-1.73V4a2 2 0 0 0-2-2z"/><circle cx="12" cy="12" r="3"/></svg><div class="a" style="left:2785px;top:533.7px;width:6px;height:6px;border-radius:3px;background:#2b3240"></div><div class="a" style="left:2785px;top:543.0px;width:6px;height:6px;border-radius:3px;background:#2b3240"></div><div class="a" style="left:2785px;top:552.3px;width:6px;height:6px;border-radius:3px;background:#2b3240"></div><div class="a" style="left:2793px;top:533.7px;width:6px;height:6px;border-radius:3px;background:#2b3240"></div><div class="a" style="left:2793px;top:543.0px;width:6px;height:6px;border-radius:3px;background:#2b3240"></div><div class="a" style="left:2793px;top:552.3px;width:6px;height:6px;border-radius:3px;background:#2b3240"></div>
<svg class="a ic" style="left:2711px;top:758px;color:#2b3240" width="33" height="33" viewBox="0 0 24 24" stroke-width="1.9"><path d="M12.22 2h-.44a2 2 0 0 0-2 2v.18a2 2 0 0 1-1 1.730l-.43.25a2 2 0 0 1-2 0l-.15-.08a2 2 0 0 0-2.73.73l-.22.38a2 2 0 0 0 .73 2.73l.15.1a2 2 0 0 1 1 1.72v.51a2 2 0 0 1-1 1.74l-.15.09a2 2 0 0 0-.73 2.73l.22.38a2 2 0 0 0 2.73.73l.15-.08a2 2 0 0 1 2 0l.43.25a2 2 0 0 1 1 1.73V20a2 2 0 0 0 2 2h.44a2 2 0 0 0 2-2v-.18a2 2 0 0 1 1-1.73l.43-.25a2 2 0 0 1 2 0l.15.08a2 2 0 0 0 2.73-.73l.22-.39a2 2 0 0 0-.73-2.730l-.15-.08a2 2 0 0 1-1-1.74v-.5a2 2 0 0 1 1-1.74l.15-.09a2 2 0 0 0 .73-2.73l-.22-.38a2 2 0 0 0-2.73-.73l-.15.08a2 2 0 0 1-2 0l-.43-.25a2 2 0 0 1-1-1.73V4a2 2 0 0 0-2-2z"/><circle cx="12" cy="12" r="3"/></svg><div class="a" style="left:2785px;top:761.7px;width:6px;height:6px;border-radius:3px;background:#2b3240"></div><div class="a" style="left:2785px;top:771.0px;width:6px;height:6px;border-radius:3px;background:#2b3240"></div><div class="a" style="left:2785px;top:780.3px;width:6px;height:6px;border-radius:3px;background:#2b3240"></div><div class="a" style="left:2793px;top:761.7px;width:6px;height:6px;border-radius:3px;background:#2b3240"></div><div class="a" style="left:2793px;top:771.0px;width:6px;height:6px;border-radius:3px;background:#2b3240"></div><div class="a" style="left:2793px;top:780.3px;width:6px;height:6px;border-radius:3px;background:#2b3240"></div>
<svg class="a ic" style="left:2711px;top:986px;color:#2b3240" width="33" height="33" viewBox="0 0 24 24" stroke-width="1.9"><path d="M12.22 2h-.44a2 2 0 0 0-2 2v.18a2 2 0 0 1-1 1.730l-.43.25a2 2 0 0 1-2 0l-.15-.08a2 2 0 0 0-2.73.73l-.22.38a2 2 0 0 0 .73 2.73l.15.1a2 2 0 0 1 1 1.72v.51a2 2 0 0 1-1 1.74l-.15.09a2 2 0 0 0-.73 2.73l.22.38a2 2 0 0 0 2.73.73l.15-.08a2 2 0 0 1 2 0l.43.25a2 2 0 0 1 1 1.73V20a2 2 0 0 0 2 2h.44a2 2 0 0 0 2-2v-.18a2 2 0 0 1 1-1.73l.43-.25a2 2 0 0 1 2 0l.15.08a2 2 0 0 0 2.73-.73l.22-.39a2 2 0 0 0-.73-2.730l-.15-.08a2 2 0 0 1-1-1.74v-.5a2 2 0 0 1 1-1.74l.15-.09a2 2 0 0 0 .73-2.73l-.22-.38a2 2 0 0 0-2.73-.73l-.15.08a2 2 0 0 1-2 0l-.43-.25a2 2 0 0 1-1-1.73V4a2 2 0 0 0-2-2z"/><circle cx="12" cy="12" r="3"/></svg><div class="a" style="left:2785px;top:989.7px;width:6px;height:6px;border-radius:3px;background:#2b3240"></div><div class="a" style="left:2785px;top:999.0px;width:6px;height:6px;border-radius:3px;background:#2b3240"></div><div class="a" style="left:2785px;top:1008.3px;width:6px;height:6px;border-radius:3px;background:#2b3240"></div><div class="a" style="left:2793px;top:989.7px;width:6px;height:6px;border-radius:3px;background:#2b3240"></div><div class="a" style="left:2793px;top:999.0px;width:6px;height:6px;border-radius:3px;background:#2b3240"></div><div class="a" style="left:2793px;top:1008.3px;width:6px;height:6px;border-radius:3px;background:#2b3240"></div>
<svg class="a ic" style="left:2711px;top:1214px;color:#2b3240" width="33" height="33" viewBox="0 0 24 24" stroke-width="1.9"><path d="M12.22 2h-.44a2 2 0 0 0-2 2v.18a2 2 0 0 1-1 1.730l-.43.25a2 2 0 0 1-2 0l-.15-.08a2 2 0 0 0-2.73.73l-.22.38a2 2 0 0 0 .73 2.73l.15.1a2 2 0 0 1 1 1.72v.51a2 2 0 0 1-1 1.74l-.15.09a2 2 0 0 0-.73 2.73l.22.38a2 2 0 0 0 2.73.73l.15-.08a2 2 0 0 1 2 0l.43.25a2 2 0 0 1 1 1.73V20a2 2 0 0 0 2 2h.44a2 2 0 0 0 2-2v-.18a2 2 0 0 1 1-1.73l.43-.25a2 2 0 0 1 2 0l.15.08a2 2 0 0 0 2.73-.73l.22-.39a2 2 0 0 0-.73-2.730l-.15-.08a2 2 0 0 1-1-1.74v-.5a2 2 0 0 1 1-1.74l.15-.09a2 2 0 0 0 .73-2.73l-.22-.38a2 2 0 0 0-2.73-.73l-.15.08a2 2 0 0 1-2 0l-.43-.25a2 2 0 0 1-1-1.73V4a2 2 0 0 0-2-2z"/><circle cx="12" cy="12" r="3"/></svg><div class="a" style="left:2785px;top:1217.7px;width:6px;height:6px;border-radius:3px;background:#2b3240"></div><div class="a" style="left:2785px;top:1227.0px;width:6px;height:6px;border-radius:3px;background:#2b3240"></div><div class="a" style="left:2785px;top:1236.3px;width:6px;height:6px;border-radius:3px;background:#2b3240"></div><div class="a" style="left:2793px;top:1217.7px;width:6px;height:6px;border-radius:3px;background:#2b3240"></div><div class="a" style="left:2793px;top:1227.0px;width:6px;height:6px;border-radius:3px;background:#2b3240"></div><div class="a" style="left:2793px;top:1236.3px;width:6px;height:6px;border-radius:3px;background:#2b3240"></div>
<svg class="a ic" style="left:2711px;top:1385px;color:#2b3240" width="33" height="33" viewBox="0 0 24 24" stroke-width="1.9"><path d="M12.22 2h-.44a2 2 0 0 0-2 2v.18a2 2 0 0 1-1 1.730l-.43.25a2 2 0 0 1-2 0l-.15-.08a2 2 0 0 0-2.73.73l-.22.38a2 2 0 0 0 .73 2.73l.15.1a2 2 0 0 1 1 1.72v.51a2 2 0 0 1-1 1.74l-.15.09a2 2 0 0 0-.73 2.73l.22.38a2 2 0 0 0 2.73.73l.15-.08a2 2 0 0 1 2 0l.43.25a2 2 0 0 1 1 1.73V20a2 2 0 0 0 2 2h.44a2 2 0 0 0 2-2v-.18a2 2 0 0 1 1-1.73l.43-.25a2 2 0 0 1 2 0l.15.08a2 2 0 0 0 2.73-.73l.22-.39a2 2 0 0 0-.73-2.730l-.15-.08a2 2 0 0 1-1-1.74v-.5a2 2 0 0 1 1-1.74l.15-.09a2 2 0 0 0 .73-2.73l-.22-.38a2 2 0 0 0-2.73-.73l-.15.08a2 2 0 0 1-2 0l-.43-.25a2 2 0 0 1-1-1.73V4a2 2 0 0 0-2-2z"/><circle cx="12" cy="12" r="3"/></svg><div class="a" style="left:2785px;top:1388.7px;width:6px;height:6px;border-radius:3px;background:#2b3240"></div><div class="a" style="left:2785px;top:1398.0px;width:6px;height:6px;border-radius:3px;background:#2b3240"></div><div class="a" style="left:2785px;top:1407.3px;width:6px;height:6px;border-radius:3px;background:#2b3240"></div><div class="a" style="left:2793px;top:1388.7px;width:6px;height:6px;border-radius:3px;background:#2b3240"></div><div class="a" style="left:2793px;top:1398.0px;width:6px;height:6px;border-radius:3px;background:#2b3240"></div><div class="a" style="left:2793px;top:1407.3px;width:6px;height:6px;border-radius:3px;background:#2b3240"></div>
<div class="a" style="left:2600px;top:814px;width:140px;height:40px;border-radius:8px;background:#f3f4f6"></div>
<div class="t" style="left:2678px;top:818px;font-size:28px;line-height:32px;color:#2b3240">123</div>
<div class="a" style="left:2600px;top:1043px;width:88px;height:38px;border-radius:8px;background:#f3f4f6"></div>
<div class="a" style="left:2600px;top:1271px;width:88px;height:38px;border-radius:8px;background:#f3f4f6"></div>
<div class="a" style="left:2307px;top:1616px;width:545px;height:2px;background:#e5e7eb"></div>
<div class="t b" style="left:2333px;top:1643px;font-size:24px;line-height:30px;color:#2b3240">Configuration</div>
<div class="t b" style="left:2333px;top:1714px;font-size:23.4px;line-height:30px;color:#2b3240">Title</div>
<div class="a" style="left:2594px;top:1690px;width:136px;height:55px;border-radius:12px;background:#f3f4f6"></div>
<div class="a" style="left:2598px;top:1694px;width:60px;height:48px;border-radius:10px;background:#fff;box-shadow:0 1px 4px rgba(0,0,0,.14)"></div>
<svg class="a ic" style="left:2614px;top:1704px;color:#3b82f6" width="28" height="28" viewBox="0 0 24 24" stroke-width="1.9"><path d="M17 3a2.85 2.83 0 1 1 4 4L7.5 20.5 2 22l1.5-5.5Z"/></svg>
<svg class="a ic" style="left:2683px;top:1704px;color:#9ca3af" width="28" height="28" viewBox="0 0 24 24" stroke-width="1.9"><rect width="18" height="18" x="3" y="3" rx="2" ry="2"/><path d="M9 17c2 0 2.8-1 2.8-2.8V10c0-2 1-3.3 3.2-3"/><path d="M9 11.2h5.7"/></svg>
<div class="a" style="left:2746px;top:1690px;width:80px;height:56px;border-radius:12px;border:2px solid #e5e7eb;background:#fff"></div>
<svg class="a ic" style="left:2771px;top:1704px;color:#2b3240" width="28" height="28" viewBox="0 0 24 24" stroke-width="2"><path d="M12 22v-5"/><path d="M9 8V2"/><path d="M15 8V2"/><path d="M18 8v5a4 4 0 0 1-4 4h-4a4 4 0 0 1-4-4V8Z"/></svg>
<div class="a" style="left:2333px;top:1754px;width:492px;height:66px;border:2px solid #d1d5db;border-radius:12px;background:#fff"></div>
<div class="t" style="left:2352px;top:1770px;font-size:29.7px;line-height:36px;color:#2b3240">Jump between apps</div>

<!-- ============ POPUP ============ -->
<div class="a" style="left:1972px;top:175px;width:707px;height:1478px;background:#fff;border:2px solid #e5e7eb;border-radius:16px;box-shadow:0 40px 50px -10px rgba(0,0,0,.1),0 16px 20px -12px rgba(0,0,0,.1)"></div>
<div class="t b" style="left:2006px;top:211px;font-size:32.5px;line-height:40px;color:#2b3240">Navbar item</div>
<div class="t b" style="left:2006px;top:296px;font-size:22.4px;line-height:30px;color:#2b3240">Label</div>
<div class="a" style="left:2414px;top:272px;width:136px;height:55px;border-radius:12px;background:#f3f4f6"></div>
<div class="a" style="left:2418px;top:276px;width:60px;height:48px;border-radius:10px;background:#fff;box-shadow:0 1px 4px rgba(0,0,0,.14)"></div>
<svg class="a ic" style="left:2434px;top:286px;color:#3b82f6" width="28" height="28" viewBox="0 0 24 24" stroke-width="1.9"><path d="M17 3a2.85 2.83 0 1 1 4 4L7.5 20.5 2 22l1.5-5.5Z"/></svg>
<svg class="a ic" style="left:2503px;top:286px;color:#9ca3af" width="28" height="28" viewBox="0 0 24 24" stroke-width="1.9"><rect width="18" height="18" x="3" y="3" rx="2" ry="2"/><path d="M9 17c2 0 2.8-1 2.8-2.8V10c0-2 1-3.3 3.2-3"/><path d="M9 11.2h5.7"/></svg>
<div class="a" style="left:2566px;top:272px;width:80px;height:56px;border-radius:12px;border:2px solid #e5e7eb;background:#fff"></div>
<svg class="a ic" style="left:2591px;top:286px;color:#2b3240" width="28" height="28" viewBox="0 0 24 24" stroke-width="2"><path d="M12 22v-5"/><path d="M9 8V2"/><path d="M15 8V2"/><path d="M18 8v5a4 4 0 0 1-4 4h-4a4 4 0 0 1-4-4V8Z"/></svg>

<div class="a" style="left:2006px;top:336px;width:639px;height:67px;border:2px solid #d1d5db;border-radius:12px;background:#fff"></div>
<div class="t" style="left:2025px;top:352px;font-size:29px;line-height:36px;color:#2b3240">Same app - hash</div>
<svg class="a" style="left:2627px;top:385px" width="16" height="16" viewBox="0 0 16 16" stroke="#4b5563" stroke-width="1.6"><path d="M15 3 3 15"/><path d="M15 9 9 15"/></svg>
<div class="a" style="left:2006px;top:420px;width:639px;height:562px;border:2px solid #e5e7eb"></div>
<div class="t b" style="left:2025px;top:442px;font-size:27px;line-height:34px;color:#2b3240">Link</div>
<div class="a" style="left:2025px;top:495px;width:602px;height:66px;border:2px solid #d1d5db;border-radius:12px;background:#fff"></div>
<div class="t" style="left:2042px;top:509px;font-size:29.5px;line-height:36px;color:#2b3240">Navigate to an app</div>
<svg class="a ic" style="left:2570px;top:509px;color:#2b3240" width="36" height="36" viewBox="0 0 24 24" stroke-width="1.8"><path d="m6 9 6 6 6-6"/></svg>
<div class="t b" style="left:2025px;top:603px;font-size:22.3px;line-height:30px;color:#2b3240">Path</div>
<svg class="a ic" style="left:2077px;top:605px;color:#374151" width="26" height="26" viewBox="0 0 24 24" stroke-width="1.8"><circle cx="12" cy="12" r="10"/><path d="M12 16v-4"/><path d="M12 8h.01"/></svg>
<div class="a" style="left:2025px;top:651px;width:602px;height:66px;border:2px solid #d1d5db;border-radius:12px;background:#fff"></div>
<div class="t" style="left:2042px;top:666px;font-size:29.9px;line-height:36px;color:#2b3240">u/henri/navapp (current app)</div>
<svg class="a ic" style="left:2565px;top:662px;color:#2b3240" width="44" height="44" viewBox="0 0 24 24" stroke-width="2.6"><path d="M18 6 6 18"/><path d="m6 6 12 12"/></svg>
<div class="t" style="left:2025px;top:734px;font-size:24px;line-height:34px;color:#374151">The current app is selected. If the path changes, the<br>path needs to be updated manually.</div>
<div class="t b" style="left:2025px;top:850px;font-size:22.5px;line-height:30px;color:#2b3240">Query Params Or Hash</div>
<svg class="a ic" style="left:2273px;top:852px;color:#374151" width="26" height="26" viewBox="0 0 24 24" stroke-width="1.8"><circle cx="12" cy="12" r="10"/><path d="M12 16v-4"/><path d="M12 8h.01"/></svg>
<div class="a" style="left:2397px;top:833px;width:136px;height:55px;border-radius:12px;background:#f3f4f6"></div>
<div class="a" style="left:2401px;top:837px;width:60px;height:48px;border-radius:10px;background:#fff;box-shadow:0 1px 4px rgba(0,0,0,.14)"></div>
<svg class="a ic" style="left:2417px;top:847px;color:#3b82f6" width="28" height="28" viewBox="0 0 24 24" stroke-width="1.9"><path d="M17 3a2.85 2.83 0 1 1 4 4L7.5 20.5 2 22l1.5-5.5Z"/></svg>
<svg class="a ic" style="left:2486px;top:847px;color:#9ca3af" width="28" height="28" viewBox="0 0 24 24" stroke-width="1.9"><rect width="18" height="18" x="3" y="3" rx="2" ry="2"/><path d="M9 17c2 0 2.8-1 2.8-2.8V10c0-2 1-3.3 3.2-3"/><path d="M9 11.2h5.7"/></svg>
<div class="a" style="left:2549px;top:833px;width:80px;height:56px;border-radius:12px;border:2px solid #e5e7eb;background:#fff"></div>
<svg class="a ic" style="left:2574px;top:847px;color:#2b3240" width="28" height="28" viewBox="0 0 24 24" stroke-width="2"><path d="M12 22v-5"/><path d="M9 8V2"/><path d="M15 8V2"/><path d="M18 8v5a4 4 0 0 1-4 4h-4a4 4 0 0 1-4-4V8Z"/></svg>

<div class="a" style="left:2025px;top:897px;width:602px;height:67px;border:2px solid #d1d5db;border-radius:12px;background:#fff"></div>
<div class="t" style="left:2042px;top:913px;font-size:30.3px;line-height:36px;color:#2b3240">#foo</div>
<svg class="a" style="left:2609px;top:946px" width="16" height="16" viewBox="0 0 16 16" stroke="#4b5563" stroke-width="1.6"><path d="M15 3 3 15"/><path d="M15 9 9 15"/></svg>
<div class="a" style="left:2006px;top:1000px;width:639px;height:98px;border:2px solid #bfdbfe;border-radius:12px;background:#eff6ff"></div>
<svg class="a ic" style="left:2036px;top:1031px;color:#3b82f6" width="34" height="34" viewBox="0 0 24 24" stroke-width="1.8"><circle cx="12" cy="12" r="10"/><path d="M12 16v-4"/><path d="M12 8h.01"/></svg>
<div class="t" style="left:2089px;top:1030px;font-size:25.5px;line-height:36px;color:#1e40af;-webkit-text-stroke:0.5px #1e40af">Link Behavior</div>
<svg class="a ic" style="left:2593px;top:1030px;color:#2b3240" width="36" height="36" viewBox="0 0 24 24" stroke-width="2"><path d="m6 9 6 6 6-6"/></svg>
<div class="t b" style="left:2006px;top:1140px;font-size:22.4px;line-height:30px;color:#2b3240">Disabled</div>
<div class="a" style="left:2414px;top:1115px;width:136px;height:55px;border-radius:12px;background:#f3f4f6"></div>
<div class="a" style="left:2418px;top:1119px;width:60px;height:48px;border-radius:10px;background:#fff;box-shadow:0 1px 4px rgba(0,0,0,.14)"></div>
<svg class="a ic" style="left:2434px;top:1129px;color:#3b82f6" width="28" height="28" viewBox="0 0 24 24" stroke-width="1.9"><path d="M17 3a2.85 2.83 0 1 1 4 4L7.5 20.5 2 22l1.5-5.5Z"/></svg>
<svg class="a ic" style="left:2503px;top:1129px;color:#9ca3af" width="28" height="28" viewBox="0 0 24 24" stroke-width="1.9"><rect width="18" height="18" x="3" y="3" rx="2" ry="2"/><path d="M9 17c2 0 2.8-1 2.8-2.8V10c0-2 1-3.3 3.2-3"/><path d="M9 11.2h5.7"/></svg>
<div class="a" style="left:2566px;top:1115px;width:80px;height:56px;border-radius:12px;border:2px solid #e5e7eb;background:#fff"></div>
<svg class="a ic" style="left:2591px;top:1129px;color:#2b3240" width="28" height="28" viewBox="0 0 24 24" stroke-width="2"><path d="M12 22v-5"/><path d="M9 8V2"/><path d="M15 8V2"/><path d="M18 8v5a4 4 0 0 1-4 4h-4a4 4 0 0 1-4-4V8Z"/></svg>

<div class="a" style="left:2590px;top:1196px;width:56px;height:32px;border-radius:16px;background:#d1d5db"></div><div class="a" style="left:2593px;top:1199px;width:26px;height:26px;border-radius:13px;background:#fff"></div>
<div class="t b" style="left:2006px;top:1268px;font-size:22.5px;line-height:30px;color:#2b3240">Hidden</div>
<div class="a" style="left:2414px;top:1243px;width:136px;height:55px;border-radius:12px;background:#f3f4f6"></div>
<div class="a" style="left:2418px;top:1247px;width:60px;height:48px;border-radius:10px;background:#fff;box-shadow:0 1px 4px rgba(0,0,0,.14)"></div>
<svg class="a ic" style="left:2434px;top:1257px;color:#3b82f6" width="28" height="28" viewBox="0 0 24 24" stroke-width="1.9"><path d="M17 3a2.85 2.83 0 1 1 4 4L7.5 20.5 2 22l1.5-5.5Z"/></svg>
<svg class="a ic" style="left:2503px;top:1257px;color:#9ca3af" width="28" height="28" viewBox="0 0 24 24" stroke-width="1.9"><rect width="18" height="18" x="3" y="3" rx="2" ry="2"/><path d="M9 17c2 0 2.8-1 2.8-2.8V10c0-2 1-3.3 3.2-3"/><path d="M9 11.2h5.7"/></svg>
<div class="a" style="left:2566px;top:1243px;width:80px;height:56px;border-radius:12px;border:2px solid #e5e7eb;background:#fff"></div>
<svg class="a ic" style="left:2591px;top:1257px;color:#2b3240" width="28" height="28" viewBox="0 0 24 24" stroke-width="2"><path d="M12 22v-5"/><path d="M9 8V2"/><path d="M15 8V2"/><path d="M18 8v5a4 4 0 0 1-4 4h-4a4 4 0 0 1-4-4V8Z"/></svg>

<div class="a" style="left:2590px;top:1323px;width:56px;height:32px;border-radius:16px;background:#d1d5db"></div><div class="a" style="left:2593px;top:1326px;width:26px;height:26px;border-radius:13px;background:#fff"></div>
<div class="t" style="left:2006px;top:1377px;font-size:29px;line-height:36px;color:#4b5563">Icon</div>
<div class="a" style="left:2006px;top:1420px;width:398px;height:66px;border:2px solid #d1d5db;border-radius:12px;background:#fff"></div>
<div class="t b" style="left:2025px;top:1435px;font-size:27.4px;line-height:36px;color:#2b3240">hash</div>
<div class="t" style="left:2006px;top:1509px;font-size:29px;line-height:36px;color:#4b5563">Caption</div>
<div class="a" style="left:2006px;top:1552px;width:639px;height:67px;border:2px solid #d1d5db;border-radius:12px;background:#fff"></div>
<div class="t" style="left:2025px;top:1567px;font-size:29.8px;line-height:36px;color:#2b3240">Cool caption</div>
</body></html>
